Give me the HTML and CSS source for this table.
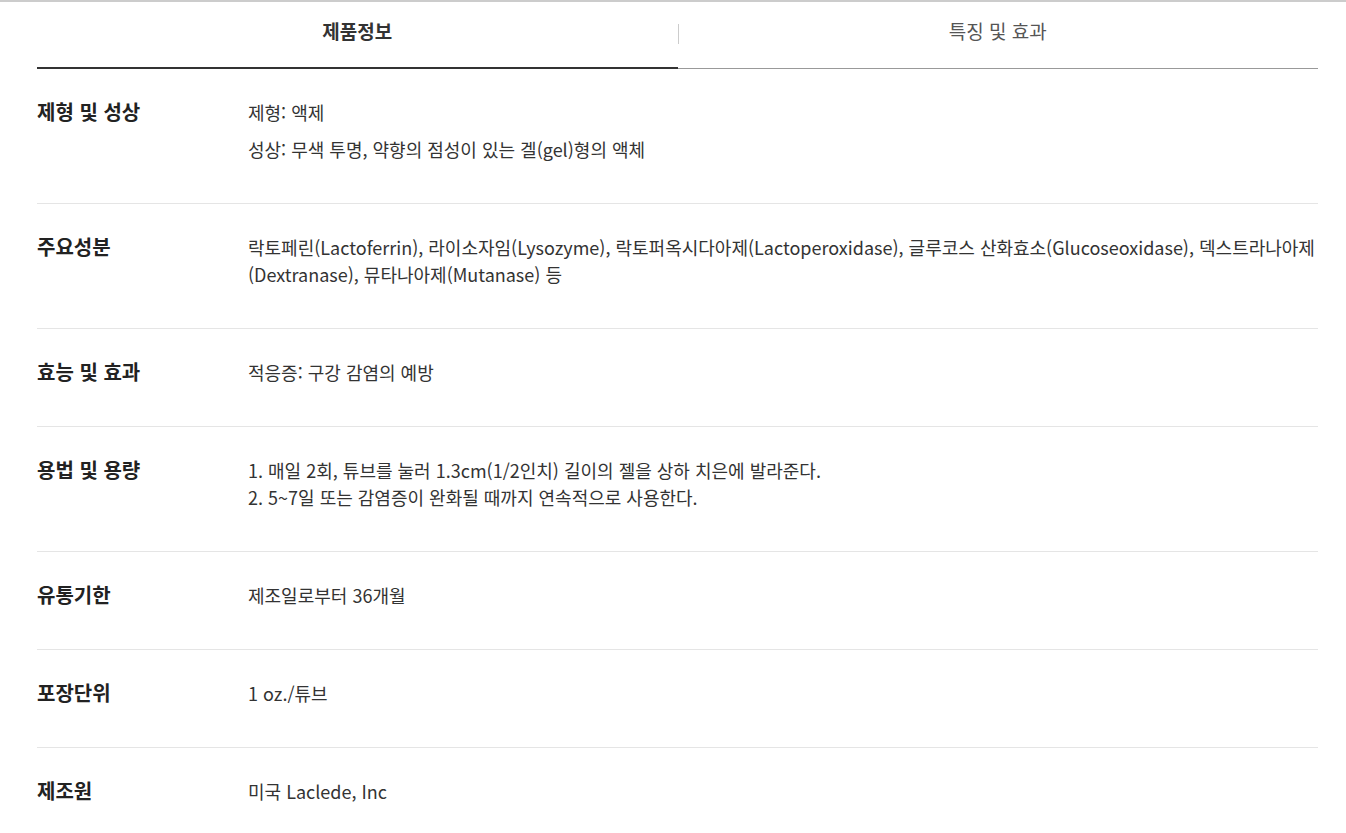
FILE: index.html
```html
<!DOCTYPE html>
<html lang="ko">
<head>
<meta charset="utf-8">
<link rel="stylesheet" href="styles.css">
</head>
<body>
<div class="page">
  <div class="wrap">
    <div class="tabs">
      <div class="tab active">제품정보</div>
      <div class="tab">특징 및 효과</div>
    </div>
    <div class="rows">
      <div class="row">
        <div class="label">제형 및 성상</div>
        <div class="content">
          <p class="para">제형: 액제</p>
          <p class="para">성상: 무색 투명, 약향의 점성이 있는 겔(gel)형의 액체</p>
        </div>
      </div>
      <div class="row">
        <div class="label">주요성분</div>
        <div class="content">락토페린(Lactoferrin), 라이소자임(Lysozyme), 락토퍼옥시다아제(Lactoperoxidase), 글루코스 산화효소(Glucoseoxidase), 덱스트라나아제<br>(Dextranase), 뮤타나아제(Mutanase) 등</div>
      </div>
      <div class="row">
        <div class="label">효능 및 효과</div>
        <div class="content">적응증: 구강 감염의 예방</div>
      </div>
      <div class="row">
        <div class="label">용법 및 용량</div>
        <div class="content">1. 매일 2회, 튜브를 눌러 1.3cm(1/2인치) 길이의 젤을 상하 치은에 발라준다.<br>2. 5~7일 또는 감염증이 완화될 때까지 연속적으로 사용한다.</div>
      </div>
      <div class="row">
        <div class="label">유통기한</div>
        <div class="content">제조일로부터 36개월</div>
      </div>
      <div class="row">
        <div class="label">포장단위</div>
        <div class="content">1 oz./튜브</div>
      </div>
      <div class="row">
        <div class="label">제조원</div>
        <div class="content">미국 Laclede, Inc</div>
      </div>
    </div>
  </div>
</div>
</body>
</html>
```
FILE: styles.css
```css
html, body {
  margin: 0;
  padding: 0;
  background: #fff;
}
body {
  font-family: "Noto Sans CJK KR", "Noto Sans", sans-serif;
  color: #333;
}
.page {
  border-top: 2px solid #cccccc;
}
.wrap {
  margin: 0 28px 0 37px;
}
.tabs {
  display: flex;
}
.tab {
  flex: 1;
  height: 67px;
  display: flex;
  align-items: center;
  justify-content: center;
  padding-bottom: 10px;
  box-sizing: border-box;
  font-size: 19px;
  color: #555;
  border-bottom: 1px solid #999;
  position: relative;
}
.tab.active {
  font-weight: bold;
  color: #333;
  border-bottom: 2px solid #333;
  padding-bottom: 9px;
}
.tab + .tab::before {
  content: "";
  position: absolute;
  left: 0;
  top: 22px;
  height: 20px;
  border-left: 1px solid #ccc;
}
.row {
  display: flex;
  padding: 30px 0 40px;
  border-bottom: 1px solid #e5e5e5;
}
.row:last-child {
  border-bottom: none;
}
.label {
  width: 211px;
  flex: none;
  font-size: 20px;
  font-weight: bold;
  color: #222;
  line-height: 25px;
  margin-bottom: 2px;
}
.content {
  flex: 1;
  font-size: 18px;
  line-height: 27px;
  color: #333;
  word-break: keep-all;
}
.para {
  margin: 0;
}
.para + .para {
  margin-top: 10px;
}
```
